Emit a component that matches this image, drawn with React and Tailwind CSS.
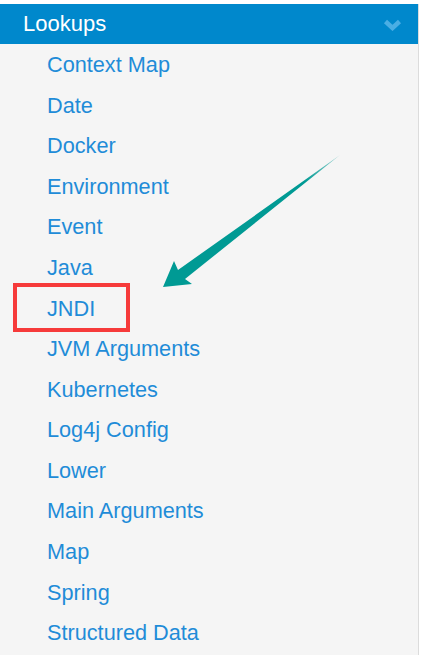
import React from "react";

const items = [
  "Context Map",
  "Date",
  "Docker",
  "Environment",
  "Event",
  "Java",
  "JNDI",
  "JVM Arguments",
  "Kubernetes",
  "Log4j Config",
  "Lower",
  "Main Arguments",
  "Map",
  "Spring",
  "Structured Data",
];

export default function App() {
  return (
    <div
      className="relative w-[422px] h-[655px] overflow-hidden bg-white pt-[4px]"
      style={{ fontFamily: '"Liberation Sans", Arial, sans-serif' }}
    >
      <div className="w-[419px] h-[651px] bg-[#f5f5f5] border-r border-[#dcdcdc]">
        <div className="h-[40px] bg-[#0088cc] flex items-center justify-between pl-[23px] pr-[16px]">
          <span className="text-white text-[22px] leading-none">Lookups</span>
          <svg width="19" height="12" viewBox="0 0 19 12" className="mt-[2px]">
            <polyline
              points="2.5,2.5 9.5,9 16.5,2.5"
              fill="none"
              stroke="#4aaee4"
              strokeWidth="4.5"
              strokeLinecap="butt"
              strokeLinejoin="miter"
            />
          </svg>
        </div>
        <ul className="flex flex-col">
          {items.map((it) => (
            <li key={it} className="h-[40.6px] flex items-center pl-[47px]">
              <span className="text-[#1f8cd8] text-[21.7px] leading-none pt-[1px]">{it}</span>
            </li>
          ))}
        </ul>
      </div>

      {/* annotation: red box */}
      <div className="absolute left-[13px] top-[283px] w-[117px] h-[49px] border-[4px] border-[#f63a3a]" />

      {/* annotation: arrow */}
      <svg
        className="absolute left-0 top-0"
        width="422"
        height="655"
        viewBox="0 0 422 655"
      >
        <defs>
          <linearGradient id="tailfade" x1="340" y1="155" x2="305" y2="182" gradientUnits="userSpaceOnUse">
            <stop offset="0" stopColor="#009a94" stopOpacity="0.35" />
            <stop offset="1" stopColor="#009a94" stopOpacity="1" />
          </linearGradient>
        </defs>
        <polygon
          points="163,287 174,261 178,270 340,155 185,279 192,284"
          fill="url(#tailfade)"
        />
      </svg>
    </div>
  );
}
